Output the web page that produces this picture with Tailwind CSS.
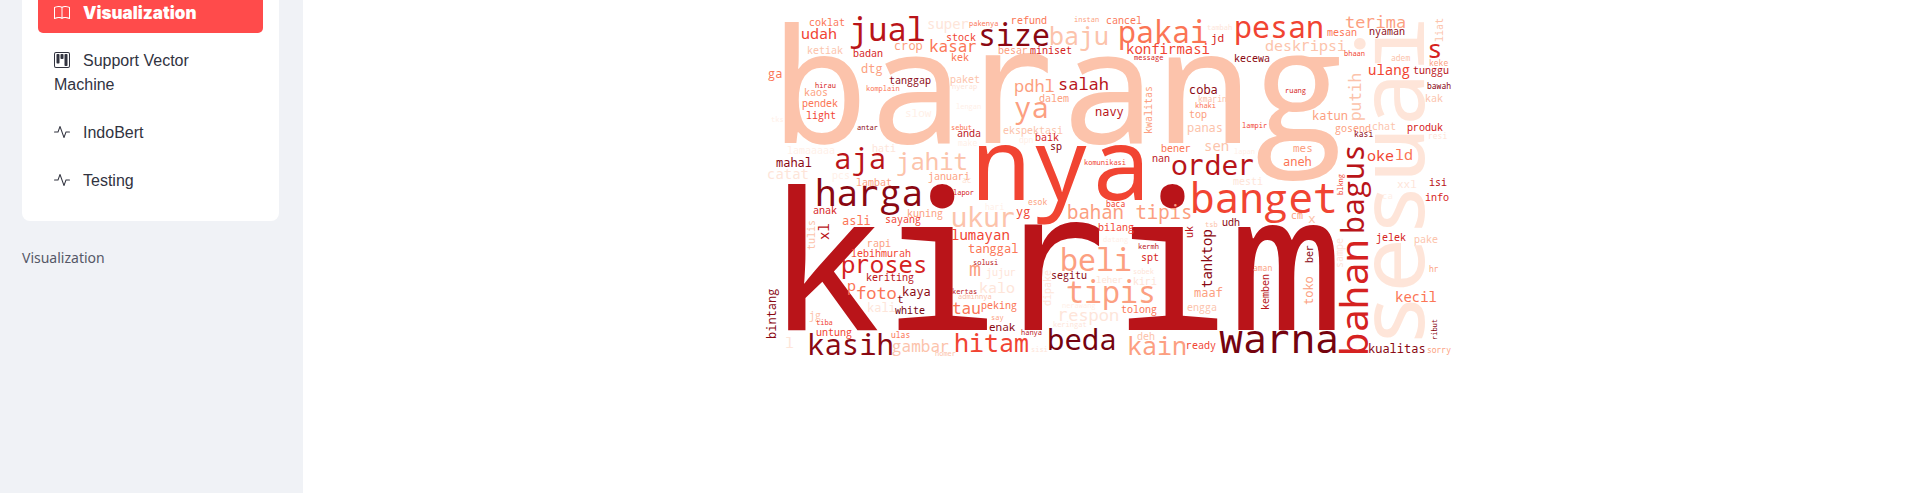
<!DOCTYPE html>
<html lang="id">
<head>
<meta charset="utf-8">
<meta name="viewport" content="width=device-width, initial-scale=1">
<title>Visualization</title>
<script src="https://cdn.jsdelivr.net/npm/@tailwindcss/browser@4"></script>
</head>
<body class="bg-white">
<div class="flex min-h-screen">
  <aside class="w-[303px] shrink-0 bg-[#f0f2f6] pl-[22px] pr-6 text-[#31333f]">
    <nav class="rounded-b-lg bg-white px-4 pb-5 font-['Liberation_Sans',Arial,sans-serif] text-base leading-6">
      <ul class="flex flex-col gap-2">
        <li><a href="#visualization" aria-current="page" class="block rounded-b-[5px] bg-[#ff4b4b] px-4 pt-px pb-2 font-['Inter',sans-serif] text-[17px] leading-6 font-black text-white"><svg class="mr-[13px] inline-block size-4 align-[-2px]" viewBox="0 0 16 16" fill="currentColor" aria-hidden="true"><path d="M1 2.828c.885-.37 2.154-.769 3.388-.893 1.33-.134 2.458.063 3.112.752v9.746c-.935-.53-2.12-.603-3.213-.493-1.18.12-2.37.461-3.287.811zm7.5-.141c.654-.689 1.782-.886 3.112-.752 1.234.124 2.503.523 3.388.893v9.923c-.918-.35-2.107-.692-3.287-.81-1.094-.111-2.278-.039-3.213.492zM8 1.783C7.015.936 5.587.81 4.287.94c-1.514.153-3.042.672-3.994 1.105A.5.5 0 0 0 0 2.5v11a.5.5 0 0 0 .707.455c.882-.4 2.303-.881 3.68-1.02 1.409-.142 2.59.087 3.223.877a.5.5 0 0 0 .78 0c.633-.79 1.814-1.019 3.222-.877 1.378.139 2.8.62 3.681 1.02A.5.5 0 0 0 16 13.5v-11a.5.5 0 0 0-.293-.455c-.952-.433-2.48-.952-3.994-1.105C10.413.809 8.985.936 8 1.783"/></svg>Visualization</a></li>
        <li><a href="#svm" class="block px-4 py-2"><svg class="mr-[13px] inline-block size-4 align-[-2px]" viewBox="0 0 16 16" fill="currentColor" aria-hidden="true"><path fill-rule="evenodd" d="M2 0h12a2 2 0 0 1 2 2v12a2 2 0 0 1-2 2H2a2 2 0 0 1-2-2V2a2 2 0 0 1 2-2zm0 1a1 1 0 0 0-1 1v12a1 1 0 0 0 1 1h12a1 1 0 0 0 1-1V2a1 1 0 0 0-1-1z"/><rect x="2.5" y="2" width="3" height="9.5" rx=".8"/><rect x="6.5" y="2" width="3" height="5" rx=".8"/><rect x="10.5" y="2" width="3" height="12" rx=".8"/></svg>Support Vector Machine</a></li>
        <li><a href="#indobert" class="block px-4 py-2"><svg class="mr-[13px] inline-block size-4 align-[-2px]" viewBox="0 0 16 16" fill="currentColor" aria-hidden="true"><path d="M6 2a.5.5 0 0 1 .47.33L10 12.036l1.53-4.208A.5.5 0 0 1 12 7.5h3.5a.5.5 0 0 1 0 1h-3.15l-1.88 5.17a.5.5 0 0 1-.94 0L6 3.964 4.47 8.171A.5.5 0 0 1 4 8.5H.5a.5.5 0 0 1 0-1h3.15l1.88-5.17A.5.5 0 0 1 6 2"/></svg>IndoBert</a></li>
        <li><a href="#testing" class="block px-4 py-2"><svg class="mr-[13px] inline-block size-4 align-[-2px]" viewBox="0 0 16 16" fill="currentColor" aria-hidden="true"><path d="M6 2a.5.5 0 0 1 .47.33L10 12.036l1.53-4.208A.5.5 0 0 1 12 7.5h3.5a.5.5 0 0 1 0 1h-3.15l-1.88 5.17a.5.5 0 0 1-.94 0L6 3.964 4.47 8.171A.5.5 0 0 1 4 8.5H.5a.5.5 0 0 1 0-1h3.15l1.88-5.17A.5.5 0 0 1 6 2"/></svg>Testing</a></li>
      </ul>
    </nav>
    <p class="pt-[25px] font-['Source_Sans_Pro','Noto_Sans',sans-serif] text-sm leading-6 text-[#555867]">Visualization</p>
  </aside>
  <main class="flex flex-1 items-start justify-center">
    <svg id="cloud" class="w-[701px] font-['Droid_Sans_Mono','Noto_Sans_Mono','DejaVu_Sans_Mono',monospace]" viewBox="760 0 701 372" role="img" aria-label="Word cloud"></svg>
  </main>
</div>
<script>
// Fill per shade, from palest to darkest.
const shades = {
  A: 'fill-[#fff0e8]', B: 'fill-[#fee5d9]', C: 'fill-[#fcc3ab]', D: 'fill-[#fc9f81]', E: 'fill-[#fb7555]',
  F: 'fill-[#f14432]', G: 'fill-[#d52221]', H: 'fill-[#b91419]', I: 'fill-[#8a0812]', J: 'fill-[#75030f]'
};
// word, left edge, baseline, width, shade
const across = [
['barang',788,143,553,'C'],['kirim',787,330,548,'H'],['nya',981,200,166,'F'],
['coklat',810,26,35,'E'],['udah',802,39,33,'F'],['jual',851,41,73,'H'],['super',928,29,39,'B'],['crop',895,50,27,'D'],['kasar',931,52,45,'E'],
['ketiak',808,54,35,'C'],['badan',854,57,30,'G'],['dtg',862,73,20,'D'],['ga',769,78,13,'E'],['tanggap',890,84,41,'I'],['hirau',816,88,21,'G'],
['komplain',867,91,34,'E'],['kaos',805,96,23,'D'],['pendek',803,107,35,'E'],['light',807,119,28,'F'],['slow',906,117,24,'A'],['tks',771,122,12,'A'],['antar',857,130,21,'I'],
['pakenya',970,26,30,'E'],['refund',1012,24,36,'E'],['instan',1074,22,25,'D'],['cancel',1107,24,35,'E'],['stock',947,41,29,'F'],['size',980,46,68,'I'],
['baju',1052,45,56,'C'],['besar',999,54,29,'D'],['miniset',1031,54,41,'G'],['kek',952,61,17,'E'],['paket',951,83,29,'C'],['nyerap',953,89,25,'B'],
['pdhl',1016,92,39,'D'],['salah',1059,90,49,'H'],['dalem',1040,102,29,'D'],['ya',1016,118,31,'D'],['lengan',957,109,25,'A'],['navy',1096,116,26,'H'],
['sebut',951,130,20,'E'],['anda',958,137,23,'H'],['ekspektasi',1004,134,59,'C'],
['pakai',1121,43,87,'E'],['tambah',1207,30,25,'B'],['jd',1212,42,12,'G'],['pesan',1237,38,87,'F'],['konfirmasi',1127,54,83,'F'],['message',1135,60,30,'G'],
['kecewa',1235,62,35,'I'],['deskripsi',1266,51,81,'C'],['coba',1190,94,27,'I'],['kmarin',1199,102,26,'C'],['khaki',1196,108,21,'E'],['top',1190,118,17,'D'],
['panas',1188,132,33,'C'],['lampir',1243,128,24,'F'],['ruang',1286,93,21,'G'],
['mesan',1328,36,29,'E'],['terima',1346,28,59,'D'],['nyaman',1370,35,35,'I'],['bhaan',1345,56,21,'F'],['s',1429,58,12,'G'],['keke',1430,66,17,'D'],
['adem',1391,61,17,'C'],['ulang',1369,75,41,'F'],['tunggu',1414,74,35,'H'],['bawah',1428,89,22,'I'],['kak',1426,102,17,'C'],['katun',1313,120,34,'D'],
['gosend',1336,132,35,'D'],['chat',1373,130,23,'C'],['produk',1408,131,35,'G'],['kasi',1355,137,17,'I'],
['lamaaaaa',788,154,46,'A'],['hati',873,152,23,'B'],['mahal',777,167,33,'I'],['aja',836,169,48,'H'],['catat',768,179,41,'B'],['pcs',833,179,17,'A'],
['jahit',897,170,70,'C'],['lambat',857,186,34,'D'],['januari',929,180,40,'D'],['harga',819,206,103,'I'],['anak',814,214,23,'G'],['kuning',908,217,35,'D'],
['asli',843,225,26,'E'],['sayang',886,223,35,'F'],['rapi',868,247,23,'D'],
['make',959,146,17,'A'],['dpn',1019,143,13,'A'],['baik',1036,141,23,'G'],['sp',1051,150,11,'I'],['komunikasi',1085,165,42,'F'],['ac',962,183,8,'B'],
['lapor',954,195,20,'G'],['esok',1028,205,17,'D'],['hari',986,210,17,'A'],['ukur',953,227,60,'C'],['yg',1017,216,13,'F'],['bahan tipis',1069,219,120,'D'],
['baca',1107,207,18,'F'],['bilang',1099,231,35,'F'],['lumayan',952,240,58,'F'],['datang',1103,242,25,'A'],
['bener',1162,152,28,'E'],['sen',1205,151,24,'C'],['lapan',1235,154,21,'A'],['nan',1153,162,17,'H'],['order',1173,175,81,'H'],['mesti',1234,185,28,'B'],
['mes',1294,152,19,'D'],['aneh',1284,166,27,'E'],['banget',1194,213,143,'F'],['cm',1292,219,11,'D'],['x',1309,223,6,'C'],['tsb',1205,227,12,'C'],['udh',1223,226,17,'I'],
['oke',1368,161,25,'F'],['ld',1397,160,16,'E'],['resi',1429,139,17,'B'],['xxl',1398,188,19,'B'],['isi',1430,186,17,'H'],['info',1426,201,23,'G'],
['ca',1383,199,10,'A'],['jelek',1377,241,29,'G'],['pake',1415,243,23,'C'],
['lebihmurah',852,257,59,'F'],['proses',843,273,84,'G'],['keriting',867,281,47,'H'],['p',849,291,7,'E'],['foto',857,299,39,'E'],['t',898,303,5,'I'],
['kaya',903,296,27,'I'],['kali',868,312,26,'B'],['white',895,314,29,'J'],['kertas',953,294,25,'H'],['adminnya',958,299,33,'C'],['solusi',973,265,25,'H'],
['tanggal',969,253,47,'E'],['m',971,276,9,'D'],['jujur',987,276,28,'B'],['kalo',981,293,33,'B'],['tau',953,314,26,'E'],['peking',982,309,35,'E'],
['say',991,320,12,'D'],['enak',990,331,24,'I'],['jg',810,319,11,'C'],['tiba',816,325,16,'F'],['untung',817,336,35,'F'],['ulas',891,338,17,'E'],
['kasih',810,355,82,'I'],['gambar',893,352,54,'C'],['homer',936,356,20,'C'],['l',787,348,7,'B'],['hitam',957,352,72,'F'],
['sisi',1031,352,16,'B'],['hanya',1022,335,21,'H'],['beda',1050,350,65,'J'],['beli',1063,271,67,'D'],['segitu',1052,279,35,'I'],['kermh',1139,249,21,'H'],
['spt',1142,261,16,'G'],['sobek',1133,274,21,'B'],['leher',1097,283,27,'B'],['kiri',1134,285,22,'B'],['tipis',1068,303,85,'D'],['nerawang',1063,308,33,'A'],
['tolong',1122,313,35,'E'],['respon',1060,321,60,'B'],['keringat',1054,327,34,'B'],['deh',1138,340,17,'C'],['kain',1130,355,56,'D'],['ready',1187,349,29,'F'],
['warna',1220,353,114,'J'],['maaf',1195,297,27,'D'],['engga',1188,311,29,'C'],
['aman',1253,271,17,'D'],['hr',1430,272,8,'D'],['kecil',1396,302,41,'E'],['kualitas',1369,353,54,'I'],['sorry',1427,353,22,'D']
];
// Words that read upwards: word, baseline x, bottom edge, length, shade
const upward = [
['sesuai',1424,342,319,'B'],['kwalitas',1152,133,47,'D'],['liat',1443,41,23,'C'],['putih',1361,119,46,'C'],['xl',829,239,15,'H'],['tulis',815,249,28,'C'],
['uk',1193,237,11,'H'],['tanktop',1212,287,58,'I'],['blkng',1343,194,21,'F'],['bagus',1364,231,85,'H'],['bahan',1368,352,111,'G'],['sampe',1343,267,30,'B'],
['bintang',776,338,47,'I'],['dipake',1051,305,34,'B'],['kemben',1269,309,35,'H'],['toko',1313,304,27,'D'],['ber',1313,262,17,'I'],['ribut',1437,339,21,'I']
];
// Letters set in another face for a footless r and a two-storey g, with their shift inside the 0.6em cell.
const alternates = {
  r: { face: "font-['DejaVu_Sans_Mono',monospace]", shift: -0.04 },
  g: { face: "font-['Open_Sans',sans-serif]", shift: 0.02 }
};
const cloud = document.getElementById('cloud');
const svgNode = name => document.createElementNS('http://www.w3.org/2000/svg', name);
function draw(word, x, y, length, shade, up) {
  const size = Math.round(length / (0.6 * word.length - 0.14));
  const bearing = Math.round((word[0] === 'w' ? 0.02 : /^[bhklmnpr]/.test(word) ? 0.1 : 0.06) * size);
  const t = svgNode('text');
  t.setAttribute('class', shades[shade]);
  t.setAttribute('font-size', size);
  const left = up ? 0 : x - bearing;
  const base = up ? 0 : y;
  if (up) t.setAttribute('transform', `translate(${x} ${y + bearing}) rotate(-90)`);
  t.setAttribute('y', base);
  let at = 0;
  for (const run of word.match(/[rg]|[^rg]+/g)) {
    const alt = alternates[run];
    const span = svgNode('tspan');
    span.textContent = run;
    span.setAttribute('x', left + (at * 0.6 + (alt ? alt.shift : 0)) * size);
    if (alt) span.setAttribute('class', alt.face);
    t.append(span);
    at += run.length;
  }
  cloud.append(t);
}
across.forEach(w => draw(...w, false));
upward.forEach(w => draw(...w, true));
</script>
</body>
</html>
